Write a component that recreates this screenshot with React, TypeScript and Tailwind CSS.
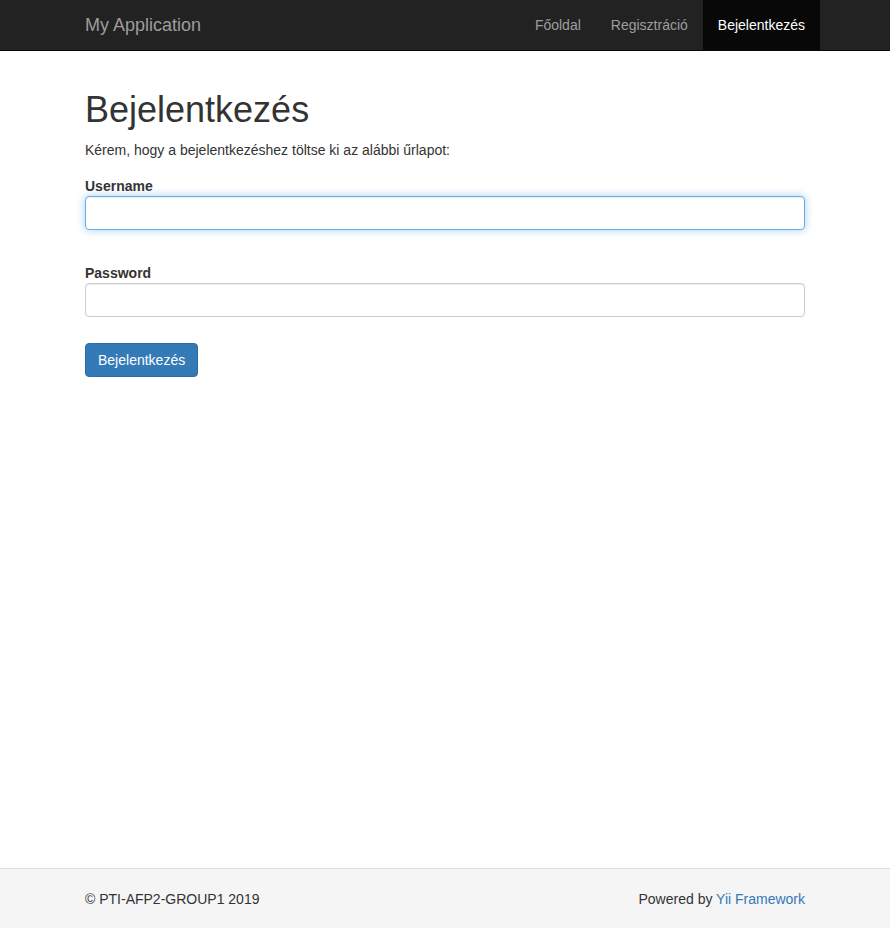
import React from "react";

export default function App() {
  const font = { fontFamily: '"Liberation Sans", Arial, Helvetica, sans-serif' };
  return (
    <div className="min-h-screen flex flex-col bg-white text-[#333] text-[14px] leading-[20px]" style={font}>
      <nav className="bg-[#222] border-b border-[#080808] h-[51px]">
        <div className="w-[750px] mx-auto px-[15px] flex items-start justify-between">
          <a className="ml-[-15px] p-[15px] text-[18px] leading-[20px] h-[50px] text-[#9d9d9d]">My Application</a>
          <ul className="flex mr-[-15px]">
            <li><a className="block py-[15px] px-[15px] leading-[20px] text-[#9d9d9d]">Főoldal</a></li>
            <li><a className="block py-[15px] px-[15px] leading-[20px] text-[#9d9d9d]">Regisztráció</a></li>
            <li><a className="block py-[15px] px-[15px] leading-[20px] text-white bg-[#080808]">Bejelentkezés</a></li>
          </ul>
        </div>
      </nav>
      <main className="flex-1">
        <div className="w-[750px] mx-auto px-[15px] pt-[19px] pb-[20px]">
          <h1 className="mt-[20px] mb-[10px] text-[36px] leading-[1.1] font-normal text-[#333]">Bejelentkezés</h1>
          <p className="mb-[16px] leading-[20px]">Kérem, hogy a bejelentkezéshez töltse ki az alábbi űrlapot:</p>
          <form onSubmit={(e) => e.preventDefault()}>
            <div>
              <label className="block font-bold leading-[20px]">Username</label>
              <input
                type="text"
                className="block w-full h-[34px] px-[12px] py-[6px] bg-white border border-[#66afe9] rounded-[4px] outline-none shadow-[inset_0_1px_1px_rgba(0,0,0,0.075),0_0_8px_rgba(102,175,233,0.6)]"
              />
            </div>
            <div className="mt-[33px]">
              <label className="block font-bold leading-[20px]">Password</label>
              <input
                type="password"
                className="block w-full h-[34px] px-[12px] py-[6px] bg-white border border-[#ccc] rounded-[4px] outline-none shadow-[inset_0_1px_1px_rgba(0,0,0,0.075)]"
              />
            </div>
            <div className="mt-[26px]">
              <button
                type="submit"
                className="h-[34px] px-[12px] py-[6px] leading-[20px] text-[14px] text-white bg-[#337ab7] border border-[#2e6da4] rounded-[4px]"
              >
                Bejelentkezés
              </button>
            </div>
          </form>
        </div>
      </main>
      <footer className="h-[60px] bg-[#f5f5f5] border-t border-[#ddd] pt-[20px]">
        <div className="w-[750px] mx-auto px-[15px] flex justify-between leading-[20px]">
          <span>© PTI-AFP2-GROUP1 2019</span>
          <span>
            Powered by <a className="text-[#337ab7]">Yii Framework</a>
          </span>
        </div>
      </footer>
    </div>
  );
}
